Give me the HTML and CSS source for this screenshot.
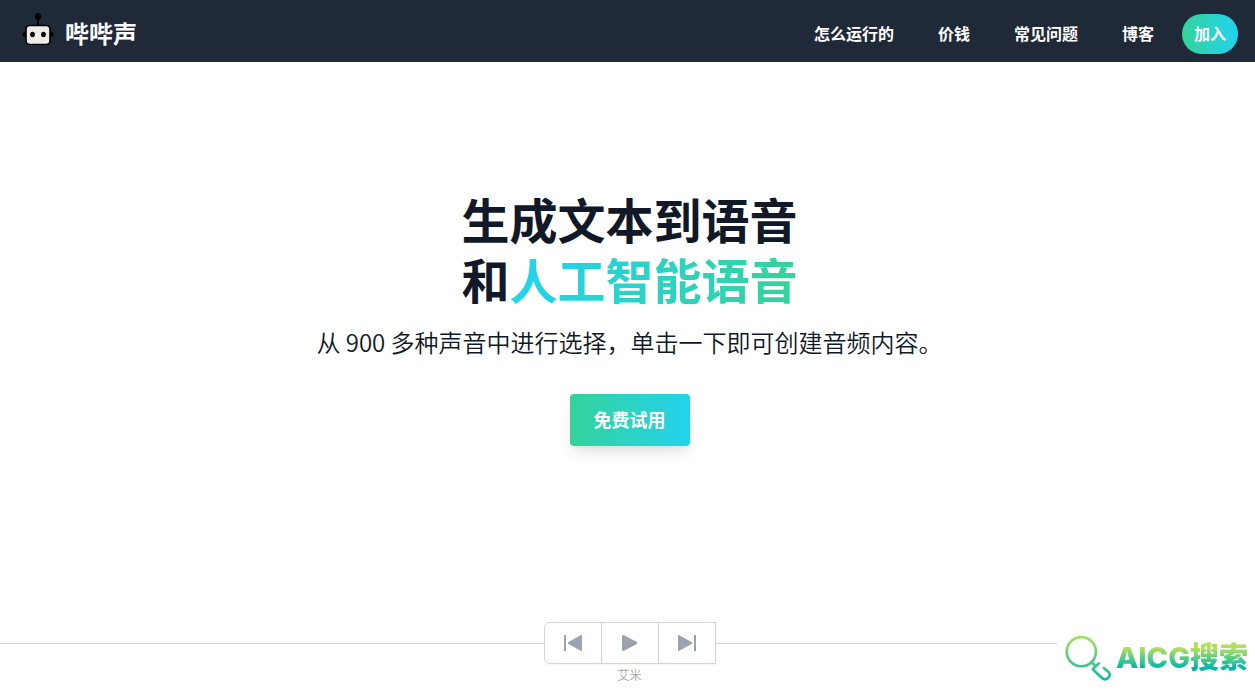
FILE: index.html
```html
<!DOCTYPE html>
<html lang="zh-CN">
<head>
<meta charset="utf-8">
<meta name="viewport" content="width=device-width, initial-scale=1">
<title>哔哔声</title>
<link rel="stylesheet" href="styles.css">
</head>
<body>
<header class="header">
  <a class="brand" href="#">
    <svg class="brand-icon" viewBox="0 0 32 32" aria-hidden="true">
      <circle cx="16" cy="3.500" r="3.200"/>
      <path d="M15 4h2v9h-2z"/>
      <rect x="0.500" y="19" width="31" height="5" rx="2.500"/>
      <rect x="4" y="12.500" width="24" height="19" rx="4" fill="#efebe7" stroke="#000" stroke-width="1.600"/>
      <ellipse cx="10.500" cy="21.500" rx="2.400" ry="2.700"/>
      <ellipse cx="21.500" cy="21.500" rx="2.400" ry="2.700"/>
    </svg>
    <span class="brand-name">哔哔声</span>
  </a>
  <nav class="nav">
    <a class="nav-link" href="#">怎么运行的</a>
    <a class="nav-link" href="#">价钱</a>
    <a class="nav-link" href="#">常见问题</a>
    <a class="nav-link" href="#">博客</a>
    <a class="join" href="#">加入</a>
  </nav>
</header>
<main class="main">
  <section class="hero">
    <h1 class="title">
      <span class="title-line">生成文本到语音</span>
      <span class="title-line">和<span class="title-accent">人工智能语音</span></span>
    </h1>
    <p class="subtitle">从 900 多种声音中进行选择，单击一下即可创建音频内容。</p>
    <button class="cta" type="button">免费试用</button>
  </section>
  <section class="player">
    <div class="player-row">
      <div class="controls">
        <button class="control" type="button" aria-label="上一个">
          <svg class="control-icon" viewBox="0 0 20 18" aria-hidden="true"><path d="M1 1h2v16H1z"/><path d="M19 2v14q0 1.400-1.300.700L5.500 10q-1.500-1 0-2L17.700 1.300Q19 .600 19 2z"/></svg>
        </button>
        <button class="control" type="button" aria-label="播放">
          <svg class="control-icon" viewBox="0 0 20 18" aria-hidden="true"><path d="M2 2.500Q2 .300 4 1.200l12.500 6.600q1.800 1.200 0 2.400L4 16.800q-2 .900-2-1.300z"/></svg>
        </button>
        <button class="control" type="button" aria-label="下一个">
          <svg class="control-icon" viewBox="0 0 20 18" aria-hidden="true"><path d="M17 1h2v16h-2z"/><path d="M1 2v14q0 1.400 1.300.700L14.500 10q1.500-1 0-2L2.300 1.300Q1 .600 1 2z"/></svg>
        </button>
      </div>
    </div>
    <p class="voice">艾米</p>
  </section>
</main>
<aside class="watermark">
  <svg class="watermark-icon" viewBox="0 0 48 48" aria-hidden="true">
    <defs>
      <linearGradient id="mark" x1="0" y1="0" x2="0" y2="48" gradientUnits="userSpaceOnUse">
        <stop offset="0" stop-color="#b0e05e"/>
        <stop offset="1" stop-color="#00b8a9"/>
      </linearGradient>
    </defs>
    <g fill="none" stroke="url(#mark)" stroke-width="2.600" stroke-linecap="round" stroke-linejoin="round">
      <circle cx="17.300" cy="17.700" r="14.600"/>
      <path d="M27.500 28l3.800 4M35 29.300l-6.300 6L38 44q3 2.600 6 0 3.200-3 .500-6l-4.700-4"/>
    </g>
  </svg>
  <span class="watermark-text">AICG搜索</span>
</aside>
</body>
</html>
```
FILE: styles.css
```css
* {
  box-sizing: border-box;
}

body {
  margin: 0;
  min-height: 100vh;
  display: flex;
  flex-direction: column;
  background: #fff;
  color: #111827;
  font-family: "Noto Sans CJK SC", sans-serif;
  overflow-x: hidden;
}

h1,
p {
  margin: 0;
}

a {
  color: inherit;
  text-decoration: none;
}

button {
  font: inherit;
  cursor: pointer;
}

.header {
  display: flex;
  align-items: center;
  justify-content: space-between;
  height: 62px;
  padding: 6px 17px 0 22px;
  background: #1f2937;
  color: #fff;
  font-weight: 700;
}

.brand {
  display: flex;
  align-items: center;
  gap: 11px;
  font-size: 24px;
  line-height: 30px;
}

.brand-icon {
  width: 32px;
  height: 32px;
  margin-bottom: 10px;
}

.brand-name {
  padding-bottom: 2px;
}

.nav {
  display: flex;
  align-items: center;
  gap: 44px;
  font-size: 16px;
  line-height: 24px;
}

.nav-link {
  padding-bottom: 2px;
}

.join {
  margin-left: -16px;
  padding: 7px 12px 9px;
  border-radius: 20px;
  background: linear-gradient(to right, #34d399, #22d3ee);
}

.main {
  flex: 1;
  display: flex;
  flex-direction: column;
}

.hero {
  flex: 1;
  display: flex;
  flex-direction: column;
  align-items: center;
  padding: 126px 0 32px 4px;
}

.title {
  font-size: 48px;
  line-height: 60px;
  font-weight: 700;
}

.title-line {
  display: block;
}

.title-accent {
  background: linear-gradient(to left, #34d399, #22d3ee);
  -webkit-background-clip: text;
  background-clip: text;
  color: transparent;
}

.subtitle {
  margin-top: 18px;
  font-size: 24px;
  line-height: 32px;
  font-weight: 350;
}

.cta {
  margin-top: 36px;
  padding: 11px 24px 13px;
  border: 0;
  border-radius: 4px;
  background: linear-gradient(to right, #34d399, #22d3ee);
  box-shadow: 0 10px 15px -3px rgba(0, 0, 0, 0.1), 0 4px 6px -2px rgba(0, 0, 0, 0.05);
  color: #fff;
  font-size: 18px;
  line-height: 28px;
  font-weight: 700;
}

.player {
  padding-bottom: 7px;
}

.player-row {
  display: flex;
  align-items: center;
  padding-bottom: 3px;
}

.player-row::before,
.player-row::after {
  content: "";
  flex: 1;
  height: 1px;
  background: #d1d5db;
}

.player-row::before {
  padding-left: 5px;
}

.controls {
  display: flex;
  border: 1px solid #d1d5db;
  border-radius: 6px 0 0 6px;
  background: #fff;
  box-shadow: 0 1px 2px rgba(0, 0, 0, 0.05);
}

.control {
  display: flex;
  align-items: center;
  justify-content: center;
  width: 56px;
  height: 40px;
  padding: 0;
  border: 0;
  background: none;
}

.control + .control {
  width: 57px;
  border-left: 1px solid #d1d5db;
}

.control-icon {
  width: 20px;
  height: 18px;
  fill: #9ca3af;
}

.voice {
  padding-left: 4px;
  color: #9ca3af;
  font-size: 12px;
  line-height: 16px;
  font-weight: 350;
  text-align: center;
}

.watermark {
  position: absolute;
  right: 0;
  bottom: 0;
  display: flex;
  align-items: center;
  gap: 4px;
  padding: 4px 7px 8px;
  background: #fff;
}

.watermark-icon {
  width: 48px;
  height: 48px;
}

.watermark-text {
  background: linear-gradient(to bottom, #b0e05e 20%, #00b8a9 80%);
  -webkit-background-clip: text;
  background-clip: text;
  color: transparent;
  font-family: Inter, "Noto Sans CJK SC", sans-serif;
  font-size: 29px;
  line-height: 32px;
  font-weight: 800;
}
```
